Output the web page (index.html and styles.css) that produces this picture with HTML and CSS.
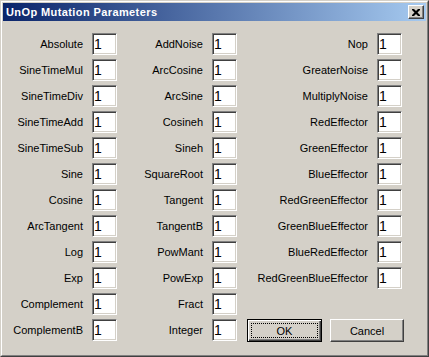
FILE: index.html
```html
<!DOCTYPE html>
<html lang="en">
<head>
    <meta charset="UTF-8">
    <title>UnOp Mutation Parameters</title>
    <link rel="stylesheet" href="styles.css">
</head>
<body>
    <div class="window">
        <div class="frame">
            <div class="title-bar">
                <span class="title">UnOp Mutation Parameters</span>
                <button class="close-btn" aria-label="Close">
                    <svg width="8" height="7" viewBox="0 0 8 7">
                        <path d="M0 0h2l2 2 2-2h2v1l-2.5 2.5 2.5 2.5v1h-2l-2-2-2 2h-2v-1l2.5-2.5-2.5-2.5z" fill="#000"/>
                    </svg>
                </button>
            </div>

            <div class="params">
                <!-- column 1 -->
                <div class="param col1"><label>Absolute</label><input type="text" value="1"></div>
                <div class="param col1"><label>SineTimeMul</label><input type="text" value="1"></div>
                <div class="param col1"><label>SineTimeDiv</label><input type="text" value="1"></div>
                <div class="param col1"><label>SineTimeAdd</label><input type="text" value="1"></div>
                <div class="param col1"><label>SineTimeSub</label><input type="text" value="1"></div>
                <div class="param col1"><label>Sine</label><input type="text" value="1"></div>
                <div class="param col1"><label>Cosine</label><input type="text" value="1"></div>
                <div class="param col1"><label>ArcTangent</label><input type="text" value="1"></div>
                <div class="param col1"><label>Log</label><input type="text" value="1"></div>
                <div class="param col1"><label>Exp</label><input type="text" value="1"></div>
                <div class="param col1"><label>Complement</label><input type="text" value="1"></div>
                <div class="param col1"><label>ComplementB</label><input type="text" value="1"></div>

                <!-- column 2 -->
                <div class="param col2"><label>AddNoise</label><input type="text" value="1"></div>
                <div class="param col2"><label>ArcCosine</label><input type="text" value="1"></div>
                <div class="param col2"><label>ArcSine</label><input type="text" value="1"></div>
                <div class="param col2"><label>Cosineh</label><input type="text" value="1"></div>
                <div class="param col2"><label>Sineh</label><input type="text" value="1"></div>
                <div class="param col2"><label>SquareRoot</label><input type="text" value="1"></div>
                <div class="param col2"><label>Tangent</label><input type="text" value="1"></div>
                <div class="param col2"><label>TangentB</label><input type="text" value="1"></div>
                <div class="param col2"><label>PowMant</label><input type="text" value="1"></div>
                <div class="param col2"><label>PowExp</label><input type="text" value="1"></div>
                <div class="param col2"><label>Fract</label><input type="text" value="1"></div>
                <div class="param col2"><label>Integer</label><input type="text" value="1"></div>

                <!-- column 3 -->
                <div class="param col3"><label>Nop</label><input type="text" value="1"></div>
                <div class="param col3"><label>GreaterNoise</label><input type="text" value="1"></div>
                <div class="param col3"><label>MultiplyNoise</label><input type="text" value="1"></div>
                <div class="param col3"><label>RedEffector</label><input type="text" value="1"></div>
                <div class="param col3"><label>GreenEffector</label><input type="text" value="1"></div>
                <div class="param col3"><label>BlueEffector</label><input type="text" value="1"></div>
                <div class="param col3"><label>RedGreenEffector</label><input type="text" value="1"></div>
                <div class="param col3"><label>GreenBlueEffector</label><input type="text" value="1"></div>
                <div class="param col3"><label>BlueRedEffector</label><input type="text" value="1"></div>
                <div class="param col3"><label>RedGreenBlueEffector</label><input type="text" value="1"></div>

                <div class="buttons">
                    <button class="btn btn-default">OK</button>
                    <button class="btn">Cancel</button>
                </div>
            </div>
        </div>
    </div>
</body>
</html>
```

FILE: styles.css
```css
body {
    margin: 0;
    background-color: #d4d0c8;
    font-family: "Liberation Sans", Arial, sans-serif;
    font-size: 11px;
}

.window {
    width: 429px;
    height: 357px;
    box-sizing: border-box;
    border: 1px solid;
    border-color: #d4d0c8 #404040 #404040 #d4d0c8;
}

.frame {
    height: 100%;
    box-sizing: border-box;
    border: 1px solid;
    border-color: #ffffff #808080 #808080 #ffffff;
    padding: 1px;
}

.title-bar {
    height: 18px;
    display: flex;
    align-items: center;
    justify-content: space-between;
    padding: 0 2px 0 3px;
    background: linear-gradient(to right, #0a246a, #a6caf0);
}

.title {
    color: #ffffff;
    font-weight: bold;
    font-size: 11px;
    letter-spacing: 0.4px;
    line-height: 18px;
}

.close-btn {
    width: 16px;
    height: 14px;
    padding: 0;
    display: flex;
    align-items: center;
    justify-content: center;
    background-color: #d4d0c8;
    border: 1px solid;
    border-color: #ffffff #404040 #404040 #ffffff;
    box-shadow: inset -1px -1px #808080;
}

.params {
    display: grid;
    grid-template-columns: 114px 120px 165px;
    grid-template-rows: repeat(12, 22px);
    grid-auto-flow: column;
    row-gap: 4px;
    padding-top: 12px;
}

.param {
    display: flex;
    align-items: center;
    justify-content: flex-end;
    gap: 9px;
}

.col1 {
    grid-column: 1;
}

.col2 {
    grid-column: 2;
}

.col3 {
    grid-column: 3;
}

.param label {
    color: #000000;
    white-space: nowrap;
}

.param input {
    width: 25px;
    height: 22px;
    box-sizing: border-box;
    margin: 0;
    padding: 0 0 0 1px;
    border: 1px solid;
    border-color: #808080 #ffffff #ffffff #808080;
    box-shadow: inset 1px 1px #404040, inset -1px -1px #d4d0c8;
    background-color: #ffffff;
    font-family: "Liberation Sans", Arial, sans-serif;
    font-size: 14px;
    line-height: 14px;
    vertical-align: top;
    outline: none;
}

.buttons {
    grid-column: 3;
    grid-row: 12;
    display: flex;
    justify-content: flex-end;
    gap: 8px;
    margin-right: -2px;
    margin-left: 10px;
}

.btn {
    position: relative;
    width: 74px;
    height: 23px;
    padding: 0;
    background-color: #d4d0c8;
    border: 1px solid;
    border-color: #ffffff #404040 #404040 #ffffff;
    box-shadow: inset -1px -1px #808080;
    font-family: "Liberation Sans", Arial, sans-serif;
    font-size: 11px;
    color: #000000;
}

.btn-default {
    width: 75px;
    border-color: #000000;
    box-shadow: inset 1px 1px #ffffff, inset -1px -1px #404040, inset -2px -2px #808080;
}

.btn-default::after {
    content: "";
    position: absolute;
    top: 3px;
    left: 3px;
    right: 3px;
    bottom: 3px;
    border: 1px dotted #000000;
}
```
